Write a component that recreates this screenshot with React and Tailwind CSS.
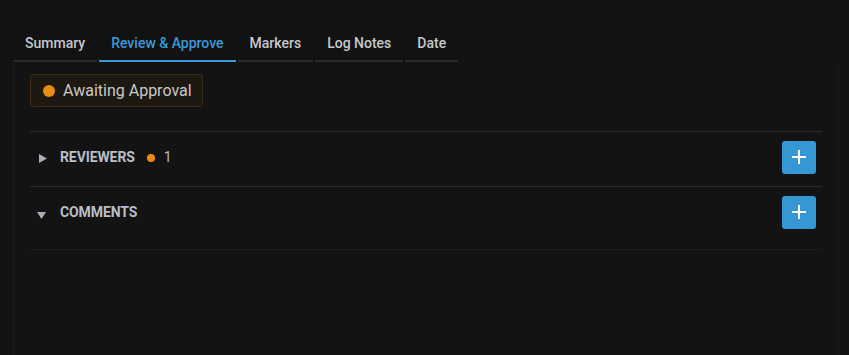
import React from 'react';
import { useState } from 'react';

const tabs = ["Summary", "Review & Approve", "Markers", "Log Notes", "Date"]

function Plus() {
  return (
    <svg width="16" height="16" viewBox="0 0 16 16">
      <rect x="7" y="1" width="2" height="14" fill="#ffffff" />
      <rect x="1" y="7" width="14" height="2" fill="#ffffff" />
    </svg>
  )
}

function Caret({open}) {
  return open ? (
    <svg width="9" height="7" viewBox="0 0 9 7" className="ml-[7px] mr-[14px] mt-[6px]">
      <polygon points="0,0 9,0 4.5,7" fill="#aab0ba" />
    </svg>
  ) : (
    <svg width="8" height="9" viewBox="0 0 8 9" className="ml-[9px] mr-[13px] mt-[2px]">
      <polygon points="0,0 8,4.5 0,9" fill="#aab0ba" />
    </svg>
  )
}

function Section({title, count, open}) {
  return (
    <div className={open ? "border-t border-[#2a2a2a] border-b border-b-[#1d1d1d] pb-[8px]" : "border-t border-[#2a2a2a]"}>
      <div className="flex items-center h-[54px] pt-[9px] pb-[12px]">
        <Caret open={open} />
        <span className="text-[14px] font-bold text-[#b9bec7] tracking-[-0.1px]">{title}</span>
        {count != null && (
          <span className="flex items-center ml-[12px] text-[14px] text-[#b9bec7]">
            <span className="w-[8px] h-[8px] rounded-full bg-[#e98c10] mr-[9px]"></span>
            {count}
          </span>
        )}
        <button className="ml-auto mr-[6px] -mt-[1px] w-[34px] h-[33px] rounded-[3px] bg-[#3597d4] flex items-center justify-center">
          <Plus />
        </button>
      </div>
    </div>
  )
}

export default function App() {
  const [tab, setTab] = useState("Review & Approve")
  return (
    <div className="w-[849px] h-[355px] bg-[#121212] pt-[29px] font-['Roboto',sans-serif] overflow-hidden">
      <div className="flex gap-[2px] pl-[13px]">
        {tabs.map(t => (
          <button
            key={t}
            onClick={() => setTab(t)}
            className={t === tab
              ? "px-[12px] pt-[6px] pb-[8px] text-[14px] leading-[17px] font-medium text-[#3a9ad9] border-b-2 border-[#3a9ad9]"
              : "px-[12px] pt-[6px] pb-[8px] text-[14px] leading-[17px] font-medium text-[#c5c8ce] border-b-2 border-[#2b2b2b]"}
          >
            {t}
          </button>
        ))}
      </div>
      <div className="ml-[13px] w-[826px] h-[300px] border-x border-[#1b1b1b] bg-[#131313] px-[16px] pt-[12px]">
        <div className="inline-flex items-center h-[33px] pl-[12px] pr-[10px] rounded-[3px] border border-[#3d2c15] bg-[#1d1810]">
          <span className="w-[12px] h-[12px] rounded-full bg-[#e98c10] mr-[8px]"></span>
          <span className="text-[16px] text-[#c9c9c9]">Awaiting Approval</span>
        </div>
        <div className="mt-[24px]">
          <Section title="REVIEWERS" count={1} />
          <Section title="COMMENTS" open />
        </div>
      </div>
    </div>
  )
}
